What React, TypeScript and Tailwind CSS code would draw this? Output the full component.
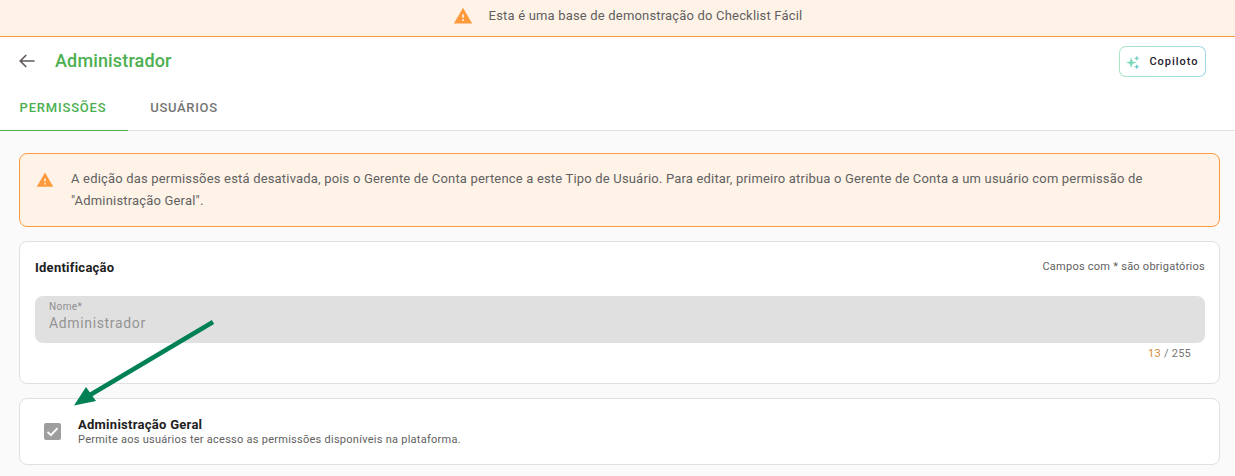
import React from "react";

function Warn({ className }: { className: string }) {
  return (
    <svg viewBox="0 0 24 24" className={className} fill="#ff9a3c">
      <path d="M1 21h22L12 2 1 21zm12-3h-2v-2h2v2zm0-4h-2v-4h2v4z" />
    </svg>
  );
}

function Sparkle() {
  return (
    <svg viewBox="0 0 16 16" className="w-[15px] h-[15px] mr-[8px]">
      <path d="M5.5 2.5 L7 6.8 L11.5 8 L7 9.2 L5.5 13.5 L4 9.2 L0 8 L4 6.8 Z" fill="#7fd8bc" />
      <path d="M11.5 .5 L12.4 2.6 L14.5 3.5 L12.4 4.4 L11.5 6.5 L10.6 4.4 L8.5 3.5 L10.6 2.6 Z" fill="#7fd3c4" />
      <path d="M11.5 9.5 L12.4 11.6 L14.5 12.5 L12.4 13.4 L11.5 15.5 L10.6 13.4 L8.5 12.5 L10.6 11.6 Z" fill="#6fc8d0" />
    </svg>
  );
}

export default function App() {
  return (
    <div className="h-[476px] w-[1235px] overflow-hidden bg-[#fafafa] font-['Roboto',sans-serif] text-[#616161]">
      <div className="h-[37px] bg-[#fff3e8] border-b border-[#ff9a3c] flex items-center justify-center pl-[20px] pb-[5px]">
        <Warn className="w-[20px] h-[20px] mr-[16px]" />
        <span className="text-[13px] tracking-[0.18px] text-[#5f5f5f]">Esta é uma base de demonstração do Checklist Fácil</span>
      </div>

      <header className="bg-white h-[94px] border-b border-[#e0e0e0] flex flex-col">
        <div className="h-[48px] flex items-center pl-[18px] pr-[29px] justify-between">
          <div className="flex items-center">
            <svg viewBox="0 0 24 24" className="w-[18px] h-[18px] mr-[19px]" fill="none" stroke="#5f5a5a" strokeWidth="2.2">
              <path d="M22 12H3M11 4l-8 8 8 8" />
            </svg>
            <h1 className="text-[18px] font-medium tracking-[0.15px] text-[#4caf50] leading-none">Administrador</h1>
          </div>
          <button className="w-[87px] h-[31px] mt-[2px] rounded-[7px] border border-transparent [background:linear-gradient(white,white)_padding-box,linear-gradient(90deg,#a8e6c4,#a0d8e4)_border-box] flex items-center justify-center pt-[1px]">
            <Sparkle />
            <span className="text-[11px] font-medium tracking-[1px] text-[#1f2230]">Copiloto</span>
          </button>
        </div>
        <nav className="flex h-[46px] pt-[1px]">
          <div className="w-[128px] flex items-center justify-center border-b border-[#4caf50] -mb-[1px] pr-[2px] text-[13px] font-medium tracking-[0.8px] text-[#4caf50]">
            PERMISSÕES
          </div>
          <div className="w-[128px] -ml-[8px] flex items-center justify-center text-[13px] font-medium tracking-[0.7px] text-[#757575]">
            USUÁRIOS
          </div>
        </nav>
      </header>

      <main className="pl-[19px] pr-[15px] pt-[22px] flex flex-col gap-[14px]">
        <div className="h-[74px] rounded-[8px] border border-[#ff9a3c] bg-[#fff3e8] flex items-center pl-[16px] pr-[20px]">
          <Warn className="w-[18px] h-[18px] mr-[17px] shrink-0 -mt-[21px]" />
          <p className="text-[13px] leading-[22px] tracking-[0.18px] text-[#616161]">
            A edição das permissões está desativada, pois o Gerente de Conta pertence a este Tipo de Usuário. Para editar, primeiro atribua o Gerente de Conta a um usuário com permissão de "Administração Geral".
          </p>
        </div>

        <section className="h-[143px] rounded-[8px] border border-[#e0e0e0] bg-white pl-[15px] pr-[14px] flex flex-col">
          <div className="flex items-center justify-between h-[52px]">
            <h2 className="text-[13px] font-bold tracking-[0.25px] text-[#212121]">Identificação</h2>
            <span className="text-[11px] tracking-[0.25px] text-[#616161] -mt-[2px]">Campos com * são obrigatórios</span>
          </div>
          <div className="mt-[2px] h-[47px] rounded-[8px] bg-[#e0e0e0] px-[14px] pt-[5px] flex flex-col">
            <span className="text-[10px] leading-[12px] tracking-[0.4px] text-[#8f8f8f]">Nome*</span>
            <span className="text-[14px] leading-[20px] tracking-[0.65px] text-[#949494]">Administrador</span>
          </div>
          <div className="text-right pr-[14px] text-[11px] tracking-[0.25px] leading-[14px] mt-[4px] text-[#757575]">
            <span className="text-[#d48a3a]">13</span> / 255
          </div>
        </section>

        <section className="h-[67px] rounded-[8px] border border-[#e0e0e0] bg-white flex items-center pl-[24px]">
          <span className="w-[17px] h-[17px] rounded-[2px] bg-[#9e9e9e] flex items-center justify-center mr-[17px] shrink-0">
            <svg viewBox="0 0 24 24" className="w-[15px] h-[15px]" fill="none" stroke="white" strokeWidth="3">
              <path d="M4 12.5l5.5 5.5L20 6.5" />
            </svg>
          </span>
          <div className="flex flex-col">
            <span className="text-[13px] leading-[16px] font-bold tracking-[0.27px] text-[#212121]">Administração Geral</span>
            <span className="text-[11px] leading-[14px] tracking-[0.26px] text-[#616161]">Permite aos usuários ter acesso as permissões disponíveis na plataforma.</span>
          </div>
        </section>
      </main>

      <svg className="absolute left-0 top-0 pointer-events-none" width="1235" height="476" viewBox="0 0 1235 476">
        <path d="M213 322 L90 395" stroke="#008055" strokeWidth="4.5" />
        <path d="M74 405.5 L86 387 L96 401 Z" fill="#008055" />
      </svg>
    </div>
  );
}
